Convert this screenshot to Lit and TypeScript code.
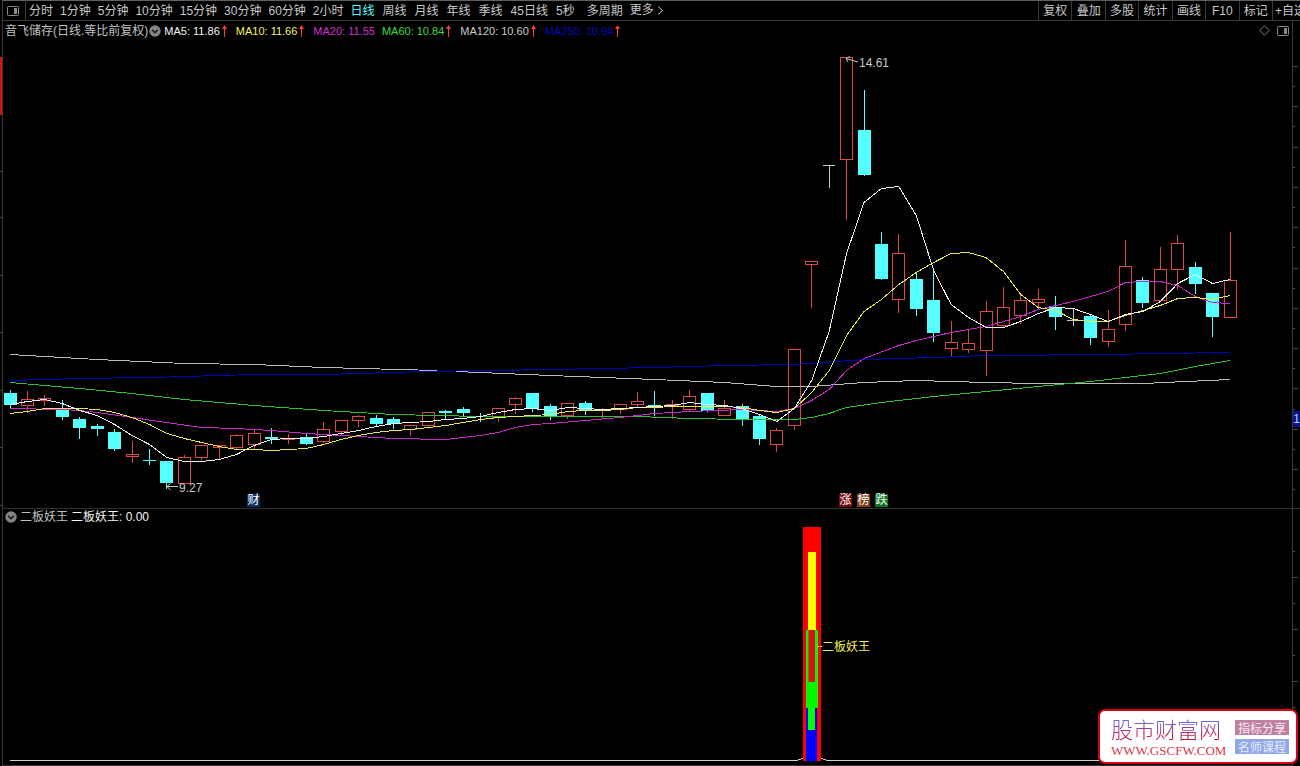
import { LitElement, html, svg, css } from "lit";
import { customElement, state } from "lit/decorators.js";
import { classMap } from "lit/directives/class-map.js";
import { styleMap } from "lit/directives/style-map.js";

type Kind = "up" | "down" | "flat";
/** kind, body top, body bottom, high, low */
type Candle = [Kind, number, number, number, number];
type Point = [number, number];

const MINUTES = ["分时", "1分钟", "5分钟", "10分钟", "15分钟", "30分钟", "60分钟", "2小时"];
const DAYS = ["日线", "周线", "月线", "年线", "季线", "45日线", "5秒"];
const TOOLS = ["复权", "叠加", "多股", "统计", "画线", "F10", "标记", "+自选"];

const AVERAGES = [
  { name: "ma5", text: "MA5: 11.86", up: true },
  { name: "ma10", text: "MA10: 11.66", up: true },
  { name: "ma20", text: "MA20: 11.55", up: false },
  { name: "ma60", text: "MA60: 10.84", up: true },
  { name: "ma120", text: "MA120: 10.60", up: true },
  { name: "ma250", text: "MA250: 10.94", up: true },
];

const CANDLES: Candle[] = [
  ["down", 393, 405, 390, 407], ["up", 399, 405, 391, 412], ["up", 398, 400, 395, 405],
  ["down", 408, 417, 400, 419], ["down", 419, 428, 417, 438], ["down", 426, 429, 424, 435],
  ["down", 432, 449, 429, 450], ["up", 454, 456, 441, 462], ["down", 460, 461, 449, 464],
  ["down", 461, 483, 461, 488], ["up", 457, 483, 455, 483], ["up", 445, 457, 445, 459],
  ["up", 445, 447, 445, 458], ["up", 435, 447, 434, 449], ["up", 433, 444, 430, 449],
  ["down", 437, 439, 428, 443], ["up", 438, 439, 434, 443], ["down", 437, 444, 434, 444],
  ["up", 429, 441, 422, 442], ["up", 420, 431, 420, 434], ["up", 416, 420, 415, 426],
  ["down", 418, 424, 415, 426], ["down", 419, 424, 417, 428], ["up", 425, 429, 425, 435],
  ["up", 412, 425, 412, 427], ["down", 411, 413, 410, 418], ["down", 409, 413, 407, 415],
  ["down", 416, 417, 413, 421], ["up", 408, 417, 408, 421], ["up", 398, 404, 397, 413],
  ["down", 393, 409, 393, 411], ["down", 406, 417, 404, 419], ["up", 403, 415, 403, 418],
  ["down", 403, 410, 401, 414], ["up", 409, 410, 408, 418], ["up", 404, 409, 404, 413],
  ["up", 401, 404, 392, 406], ["down", 405, 406, 391, 415], ["up", 404, 405, 400, 418],
  ["up", 396, 409, 390, 411], ["down", 393, 411, 393, 411], ["up", 408, 415, 400, 415],
  ["down", 406, 419, 404, 425], ["down", 416, 439, 414, 444], ["up", 430, 444, 428, 451],
  ["up", 349, 425, 349, 429], ["up", 261, 264, 261, 307], ["flat", 165, 165, 165, 187],
  ["up", 57, 159, 57, 219], ["down", 130, 175, 90, 175], ["down", 244, 279, 232, 279],
  ["up", 253, 299, 234, 312], ["down", 279, 309, 273, 315], ["down", 300, 333, 270, 341],
  ["up", 342, 348, 321, 356], ["up", 343, 349, 330, 352], ["up", 311, 350, 301, 375],
  ["up", 307, 325, 287, 326], ["up", 300, 315, 293, 323], ["up", 299, 302, 289, 308],
  ["down", 307, 317, 296, 329], ["flat", 320, 320, 309, 325], ["down", 316, 338, 314, 344],
  ["up", 329, 341, 310, 346], ["up", 266, 324, 240, 330], ["down", 280, 303, 277, 307],
  ["up", 269, 300, 247, 301], ["up", 243, 269, 235, 289], ["down", 267, 284, 262, 293],
  ["down", 293, 317, 293, 336], ["up", 280, 317, 232, 317],
];

/** Curves as [day index, y] vertices. */
const dense = (ys: number[], start = 0): Point[] => ys.map((y, i) => [i + start, y]);

const CURVES: { name: string; points: Point[] }[] = [
  {
    name: "ma250",
    points: [[0, 380], [4, 378], [8, 377], [14, 374], [18, 374], [24, 371], [31, 369], [37, 367], [41, 365],
      [45, 364], [49, 359], [53, 357], [56, 355], [63, 354], [66, 353], [70, 352]],
  },
  {
    name: "ma120",
    points: [[0, 354], [5, 359], [10, 363], [14, 364], [18, 367], [24.5, 370]],
  },
  {
    name: "ma120",
    points: [[25.6, 371], [31, 375], [37, 379], [41, 382], [44, 386], [46, 386], [49, 382], [52, 380],
      [56, 382], [59, 383], [65, 383], [70, 379]],
  },
  {
    name: "ma60",
    points: [[0, 382], [4, 388], [7, 393], [10, 399], [14, 405], [18, 410], [22, 414], [27, 416], [30, 416],
      [36, 416], [39, 418], [42, 419], [45, 419], [46, 417], [47, 413], [48, 407], [50, 402], [53, 396],
      [56, 391], [59, 386], [62, 381], [64, 377], [66, 373], [68, 366], [70, 360]],
  },
  {
    name: "ma20",
    points: [[0, 408], [3, 409], [4, 410], [5, 412], [7, 417], [9, 422], [11, 427], [13, 428], [15, 430],
      [17, 433], [20, 436], [22, 438], [25, 439], [27, 435], [28, 432], [29, 427], [30, 424], [31, 423],
      [33, 420], [35, 417], [37, 413], [39, 411], [42, 409], [43, 410], [44, 411], [45, 408], [46, 400],
      [47, 389], [48, 370], [49, 358], [51, 345], [52, 340], [54, 332], [56, 326], [58, 316], [59, 309],
      [61, 301], [63, 291], [64, 282], [65, 281], [66, 281], [67, 285], [68, 296], [69, 302], [70, 303]],
  },
  {
    name: "ma10",
    points: dense([413, 411, 408, 408, 408, 409, 412, 417, 424, 433, 438, 442, 446, 449, 449, 450, 449, 448,
      444, 439, 435, 432, 430, 429, 427, 425, 422, 419, 417, 416, 415, 414, 411, 410, 410, 409, 407, 407, 406,
      406, 406, 406, 407, 410, 412, 408, 392, 370, 335, 311, 299, 284, 272, 262, 253, 252, 257, 271, 294, 307,
      310, 319, 321, 321, 315, 310, 305, 298, 297, 299, 295]),
  },
  {
    name: "ma5",
    points: dense([404, 401, 399, 403, 410, 415, 424, 435, 444, 457, 461, 461, 459, 454, 445, 439, 438, 438,
      436, 433, 430, 426, 423, 422, 421, 419, 418, 416, 412, 409, 408, 410, 407, 408, 409, 408, 407, 406, 405,
      402, 404, 405, 408, 414, 421, 408, 380, 331, 253, 202, 188, 186, 215, 270, 304, 317, 327, 327, 321, 313,
      307, 308, 314, 321, 314, 311, 301, 283, 274, 283, 279]),
  },
];

const PLOT = { left: 3, top: 40, width: 1289, height: 468 };
const EVENTS = [
  { text: "财", kind: "report", x: 247 },
  { text: "涨", kind: "rise", x: 839 },
  { text: "榜", kind: "rank", x: 857 },
  { text: "跌", kind: "fall", x: 875 },
];

const dayX = (i: number) => Math.floor(10 + (1220 * i) / 70);
const pctX = (x: number) => `${((x - PLOT.left) / PLOT.width) * 100}%`;
const pctY = (y: number) => `${((y - PLOT.top) / PLOT.height) * 100}%`;

const panelIcon = html`<svg class="icon" width="12" height="10" viewBox="0 0 12 10" aria-hidden="true">
  <rect x="0.5" y="0.5" width="11" height="9" rx="1" fill="none" stroke="#8a8a8a" />
  <rect x="7" y="2" width="3" height="6" fill="#8a8a8a" />
</svg>`;

const chevronIcon = html`<svg class="icon" width="12" height="12" viewBox="0 0 12 12" aria-hidden="true">
  <circle cx="6" cy="6" r="5.7" fill="#858585" />
  <path d="M3 4.8 L6 7.6 L9 4.8" fill="none" stroke="#181818" stroke-width="1.5" />
</svg>`;

const upArrow = html`<svg class="icon" width="5" height="12" viewBox="0 0 5 12" aria-hidden="true">
  <path d="M2 2h1v10h-1z M2.5 0 L5 4 H0z" fill="#ff4030" />
</svg>`;

@customElement("period-bar")
class PeriodBar extends LitElement {
  static styles = css`
    :host { display: block; }
    .bar {
      display: flex; height: 21px; box-sizing: border-box; overflow: hidden;
      border-top: 1px solid #5c625e; border-bottom: 1px solid #3a3a3a;
      margin-left: 2px; border-left: 1px solid #3a3a3a;
    }
    button {
      appearance: none; border: 0; margin: 0; padding: 0; background: none; color: #c8c8c8;
      font: inherit; line-height: 21px; white-space: nowrap; cursor: pointer;
    }
    .toggle { width: 23px; border-right: 1px solid #3a3a3a; display: flex; align-items: center; justify-content: center; padding-right: 2px; }
    .periods { display: flex; flex: 1; min-width: 0; padding-left: 3px; overflow: hidden; }
    .group { display: flex; gap: 7px; padding-right: 7px; }
    .days { gap: 8px; padding-right: 12px; }
    .active { color: #5ff; }
    .more { display: flex; align-items: center; gap: 3px; }
    .tools { display: grid; grid-template-columns: repeat(7, 1fr) 28px; width: 262px; overflow: hidden; }
    .tool { border-left: 1px solid #3a3a3a; text-align: center; overflow: hidden; }
    .tool:last-child { text-align: left; padding-left: 2px; }
  `;
  @state() private active = "日线";

  private period(name: string) {
    return html`<button type="button" class=${classMap({ active: this.active === name })}
      @click=${() => (this.active = name)}>${name}</button>`;
  }

  render() {
    return html`<div class="bar">
      <button type="button" class="toggle" aria-label="侧栏">${panelIcon}</button>
      <nav class="periods">
        <div class="group">${MINUTES.map((p) => this.period(p))}</div>
        <div class="group days">${DAYS.map((p) => this.period(p))}</div>
        <div class="group">
          ${this.period("多周期")}
          <button type="button" class="more">更多<svg width="7" height="9" viewBox="0 0 7 9" aria-hidden="true">
            <path d="M1 0.5 L5.5 4.5 L1 8.5" fill="none" stroke="#c8c8c8" /></svg></button>
        </div>
      </nav>
      <div class="tools">${TOOLS.map((t) => html`<button type="button" class="tool">${t}</button>`)}</div>
    </div>`;
  }
}

@customElement("price-chart")
class PriceChart extends LitElement {
  static styles = css`
    :host { display: flex; flex-direction: column; min-height: 0; }
    .head { display: flex; align-items: center; height: 19px; padding: 0 2px; white-space: nowrap; overflow: hidden; }
    .title { margin-right: 1px; }
    .icon { flex: none; }
    .values { display: flex; flex: 1; padding-left: 3px; font-size: 11px; gap: 9px; min-width: 0; }
    .value { display: flex; align-items: center; gap: 2px; }
    .value.ma20 { margin-right: -2px; }
    .value.ma5 { color: #f4f4f4; }
    .value.ma10 { color: #f4f45c; }
    .value.ma20 { color: #d030d0; }
    .value.ma60 { color: #40d840; }
    .value.ma120 { color: #c8c8c8; }
    .value.ma250 { color: #0808b8; }
    .actions { display: flex; align-items: center; gap: 7px; padding-right: 1px; }
    button { appearance: none; border: 0; padding: 0; background: none; display: flex; }
    .plot { position: relative; flex: 1; min-height: 0; }
    .canvas { display: block; position: absolute; inset: 0; width: 100%; height: 100%; }
    .up { stroke: #dc4848; fill: none; }
    .down { fill: #55ffff; }
    .flat { stroke: #c8c8c8; fill: none; }
    .curve { fill: none; vector-effect: non-scaling-stroke; }
    .curve.ma5 { stroke: #f0f0f0; }
    .curve.ma10 { stroke: #e8e850; }
    .curve.ma20 { stroke: #c828c8; }
    .curve.ma60 { stroke: #30c030; }
    .curve.ma120 { stroke: #b8b8b8; }
    .curve.ma250 { stroke: #0000c0; }
    .pointer { stroke: #c8c8c8; fill: none; }
    .mark { position: absolute; line-height: 14px; color: #c8c8c8; }
    .event { position: absolute; bottom: 1px; width: 13px; line-height: 13px; text-align: center; color: #fff; }
    .report { background: #0c3460; }
    .rise { background: #7a0812; }
    .rank { background: #84401a; }
    .fall { background: #0c7424; }
  `;

  private candle([kind, top, bottom, high, low]: Candle, i: number) {
    const x = dayX(i);
    if (kind === "down") {
      return svg`<g class="down"><rect x=${x} y=${high} width="1" height=${low - high + 1} />
        <rect x=${x - 6} y=${top} width="13" height=${bottom - top} /></g>`;
    }
    if (kind === "flat") {
      return svg`<path class="flat" d="M${x - 6} ${top + 0.5}h12M${x + 0.5} ${high}V${low + 1}" />`;
    }
    return svg`<path class="up" d="M${x + 0.5} ${high}V${top}M${x + 0.5} ${bottom}V${low + 1}M${x - 5.5} ${top + 0.5}h12V${bottom + 0.5}h-12z" />`;
  }

  private curve(name: string, points: Point[]) {
    const d = points.map(([i, y]) => `${10 + (1220 / 70) * i},${y + 0.5}`).join(" ");
    return svg`<polyline class="curve ${name}" points=${d} />`;
  }

  render() {
    return html`
      <div class="head">
        <span class="title">音飞储存(日线.等比前复权)</span>${chevronIcon}
        <div class="values">
          ${AVERAGES.map((a) => html`<span class="value ${a.name}">${a.text}${a.up ? upArrow : ""}</span>`)}
        </div>
        <div class="actions">
          <button type="button" aria-label="标记点"><svg width="11" height="11" viewBox="0 0 11 11">
            <path d="M5.5 0.8 L10.2 5.5 L5.5 10.2 L0.8 5.5z" fill="none" stroke="#808080" /></svg></button>
          <button type="button" aria-label="面板">${panelIcon}</button>
        </div>
      </div>
      <div class="plot">
        <svg class="canvas" viewBox="${PLOT.left} ${PLOT.top} ${PLOT.width} ${PLOT.height}"
          preserveAspectRatio="none" shape-rendering="crispEdges">
          ${CANDLES.map((c, i) => this.candle(c, i))}
          ${CURVES.map((c) => this.curve(c.name, c.points))}
          <path class="pointer" shape-rendering="auto" d="M858 62 L846 58.5 M850 56.5 L846 58.5 L848 62" />
          <path class="pointer" shape-rendering="auto" d="M178 486.5 H167 M170.500 483.500 L167 486.500 L170.500 490" />
        </svg>
        <span class="mark" style=${styleMap({ left: pctX(859), top: pctY(56) })}>14.61</span>
        <span class="mark" style=${styleMap({ left: pctX(179), top: pctY(481) })}>9.27</span>
        ${EVENTS.map((e) => html`<span class="event ${e.kind}" style=${styleMap({ left: pctX(e.x) })}>${e.text}</span>`)}
      </div>`;
  }
}

@customElement("signal-chart")
class SignalChart extends LitElement {
  static styles = css`
    :host { display: flex; flex-direction: column; min-height: 0; border-top: 1px solid #303030; }
    .head { display: flex; align-items: center; gap: 3px; height: 15px; padding-left: 2px; white-space: nowrap; }
    .value { color: #f4f4f4; }
    .plot { position: relative; flex: 1; min-height: 0; }
    .canvas { display: block; position: absolute; inset: 0; width: 100%; height: 100%; }
    .label { position: absolute; line-height: 14px; color: #f0f050; }
  `;

  render() {
    const label = { left: pctX(822), top: `${((640 - 524) / 242) * 100}%` };
    return html`
      <div class="head">${chevronIcon}<span class="name">二板妖王</span><span class="value">二板妖王: 0.00</span></div>
      <div class="plot">
        <svg class="canvas" viewBox="3 524 1289 242" preserveAspectRatio="none" shape-rendering="crispEdges">
          <path d="M10 760.500H796l7-2h18l7 2H1230" fill="none" stroke="#d0d0d0" />
          <rect x="3" y="765" width="1289" height="1" fill="#303030" />
          <rect x="803" y="527" width="18" height="234" fill="#ff0000" />
          <rect x="808" y="552" width="8" height="78" fill="#ffff00" />
          <rect x="806" y="630" width="12" height="78" fill="#00f800" />
          <rect x="809" y="630" width="6" height="52" fill="#e01010" />
          <rect x="808" y="630" width="1" height="52" fill="#708000" />
          <rect x="806" y="708" width="11" height="53" fill="#0000ff" />
          <rect x="808" y="708" width="7" height="22" fill="#00ff00" />
          <path d="M817 646.500h2M820 646.500h2" stroke="#f0f050" />
        </svg>
        <span class="label" style=${styleMap(label)}>二板妖王</span>
      </div>`;
  }
}

@customElement("site-badge")
class SiteBadge extends LitElement {
  static styles = css`
    :host { display: block; }
    .card {
      display: flex; align-items: center; justify-content: space-between; box-sizing: border-box;
      width: 200px; height: 55px; padding: 0 7px 0 11px; color: #d83848; text-decoration: none;
      background: #fff; border: 2px solid #d80010; border-radius: 7px;
    }
    .brand { display: flex; flex-direction: column; padding-bottom: 4px; }
    .name {
      font: 300 22px/32px "Noto Sans CJK SC", sans-serif; color: transparent;
      background: linear-gradient(#6868e0 30%, #c81840 75%); background-clip: text; -webkit-background-clip: text;
    }
    .site { font: 13px/14px "Liberation Serif", serif; }
    .tags { display: flex; flex-direction: column; gap: 4px; }
    .tag { padding: 0 3px; font: 12px/15px "Noto Sans CJK SC", sans-serif; color: #f8e8f4; background: #c080a0; }
    .course { background: #90a8e8; color: #e4ecff; }
  `;
  render() {
    return html`<a class="card" href="#">
      <span class="brand"><span class="name">股市财富网</span><span class="site">WWW.GSCFW.COM</span></span>
      <span class="tags"><span class="tag">指标分享</span><span class="tag course">名师课程</span></span>
    </a>`;
  }
}

@customElement("app-root")
class AppRoot extends LitElement {
  static styles = css`
    :host {
      display: flex; flex-direction: column; position: relative; height: 100vh; overflow: hidden;
      background: #000; color: #c0c0c0;
      font: 12px/14px "Liberation Sans", "Noto Sans CJK SC", sans-serif;
    }
    .body { display: grid; flex: 1; min-height: 0; grid-template-columns: 2px minmax(0, 1fr) 8px; }
    .charts { display: grid; grid-template-rows: 487fr 258fr; min-height: 0; border-left: 1px solid #3a3a3a; }
    .gutter, .axis { position: relative; min-height: 0; }
    .axis { border-left: 1px solid #3a3a3a; }
    .scale { display: block; position: absolute; inset: 0; width: 100%; height: 100%; }
    .page { position: absolute; top: 52.400%; left: 0; width: 7px; line-height: 16px; text-align: center; color: #a0e0ff; background: #10108c; }
    .badge { position: absolute; right: 2px; bottom: 2px; }
  `;

  render() {
    const left = [114, 171, 217, 275, 332, 390, 447, 505];
    const right = Array.from({ length: 22 }, (_, i) => Math.round(66 + i * 20.15));
    const lower = Array.from({ length: 8 }, (_, i) => 551 + i * 26);
    return html`
      <period-bar></period-bar>
      <div class="body">
        <div class="gutter">
          <svg class="scale" viewBox="0 21 2 745" preserveAspectRatio="none" shape-rendering="crispEdges">
            ${left.map((y) => svg`<rect x="0" y=${y} width="2" height="1" fill="#484848" />`)}
            <rect x="0" y="57" width="2" height="58" fill="#d01810" />
          </svg>
        </div>
        <div class="charts"><price-chart></price-chart><signal-chart></signal-chart></div>
        <div class="axis">
          <svg class="scale" viewBox="0 21 7 745" preserveAspectRatio="none" shape-rendering="crispEdges">
            ${right.map((y, i) => svg`<rect x="0" y=${y} width=${i % 2 ? 2 : 5} height="1" fill="#484848" />`)}
            ${lower.map((y, i) => svg`<rect x="0" y=${y} width=${i % 2 ? 5 : 2} height="1" fill="#484848" />`)}
            <rect x="0" y="508" width="7" height="1" fill="#303030" />
          </svg>
          <span class="page">1</span>
        </div>
      </div>
      <site-badge class="badge"></site-badge>`;
  }
}
